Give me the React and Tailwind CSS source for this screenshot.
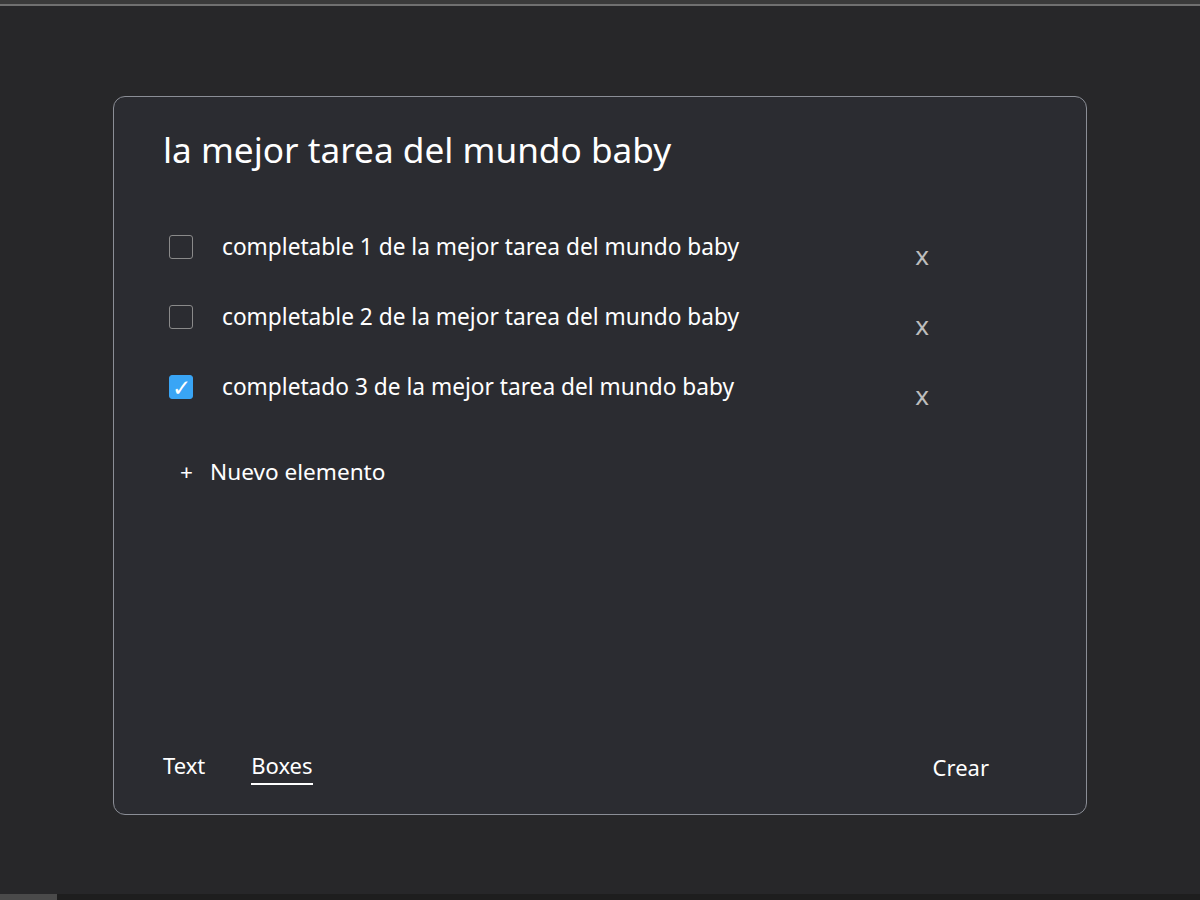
import { useState } from 'react';

const font = { fontFamily: '"Noto Sans", "Open Sans", sans-serif' };

const initialItems = [
  { id: 1, text: 'completable 1 de la mejor tarea del mundo baby', done: false },
  { id: 2, text: 'completable 2 de la mejor tarea del mundo baby', done: false },
  { id: 3, text: 'completado 3 de la mejor tarea del mundo baby', done: true },
];

const App = () => {
  const [items, setItems] = useState(initialItems);
  const [mode, setMode] = useState('boxes');

  const toggle = (id) => {
    setItems(items.map((it) => (it.id === id ? { ...it, done: !it.done } : it)));
  };

  const remove = (id) => {
    setItems(items.filter((it) => it.id !== id));
  };

  return (
    <div className="h-[900px] w-[1200px] flex flex-col bg-[#272729] text-white overflow-hidden" style={font}>
      {/* top strip */}
      <div className="h-[4px] bg-[#3a3a3a]" />
      <div className="h-[2px] bg-[#707070]" />

      <div className="flex-1 pt-[90px] pl-[113px]">
        <div className="w-[974px] h-[719px] rounded-[12px] border border-[#8b8e96] bg-[#2b2c31] flex flex-col pl-[49px] pr-[97px] pt-[26px] pb-[29px]">
          <h1 className="text-[35.2px] leading-[52px] text-white">la mejor tarea del mundo baby</h1>

          {/* Items */}
          <div className="mt-[52px] mr-[60px] flex flex-col gap-[24px]">
            {items.map((item) => (
              <div key={item.id} className="flex items-start h-[46px]">
                <button
                  onClick={() => toggle(item.id)}
                  className={
                    item.done
                      ? 'mt-[8px] ml-[6px] w-[24px] h-[24px] rounded-[3px] bg-[#39a5f5] border border-[#39a5f5] flex items-center justify-center text-white text-[23px] leading-none'
                      : 'mt-[8px] ml-[6px] w-[24px] h-[24px] rounded-[3px] border border-[#8a8a8a] bg-transparent'
                  }
                >
                  {item.done ? '✓' : ''}
                </button>
                <span className="ml-[29px] mt-[4px] text-[22.7px] leading-[32px] text-white flex-1">{item.text}</span>
                <button
                  onClick={() => remove(item.id)}
                  className="mt-[12px] text-[26px] leading-[32px] text-[#bdbdbd]"
                >
                  x
                </button>
              </div>
            ))}
          </div>

          <div className="mt-[43px] ml-[17px] flex items-center text-[22.6px] leading-[32px] text-white">
            <span className="w-[30px]">+</span>
            <span>Nuevo elemento</span>
          </div>

          <div className="flex-1" />

          {/* Footer */}
          <div className="flex items-start justify-between">
            <div className="flex gap-[46px]">
              <button
                onClick={() => setMode('text')}
                className={
                  mode === 'text'
                    ? 'text-[22px] leading-[32px] text-white border-b-2 border-white pb-[2px]'
                    : 'text-[22px] leading-[32px] text-white border-b-2 border-transparent pb-[2px]'
                }
              >
                Text
              </button>
              <button
                onClick={() => setMode('boxes')}
                className={
                  mode === 'boxes'
                    ? 'text-[22px] leading-[32px] text-white border-b-2 border-white pb-[2px]'
                    : 'text-[22px] leading-[32px] text-white border-b-2 border-transparent pb-[2px]'
                }
              >
                Boxes
              </button>
            </div>
            <button className="text-[22px] leading-[32px] text-white mt-[2px]">Crear</button>
          </div>
        </div>
      </div>

      {/* bottom scrollbar */}
      <div className="h-[6px] bg-[#1e1e1e] flex">
        <div className="w-[57px] bg-[#4a4a4a]" />
      </div>
    </div>
  );
};

export default App;
